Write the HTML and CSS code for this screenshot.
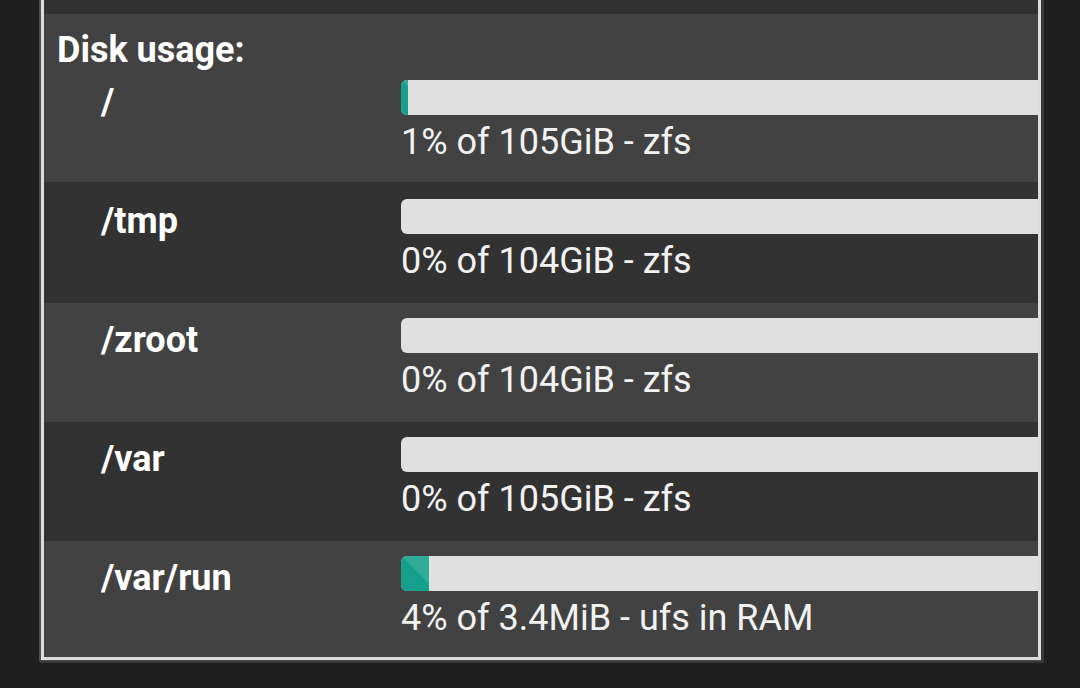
FILE: index.html
```html
<!DOCTYPE html>
<html>
<head>
<meta charset="utf-8">
<link rel="stylesheet" href="styles.css">
</head>
<body>
<div class="page">
  <div class="panel">
    <div class="row-top"></div>
    <div class="row row-light first">
      <div class="title">Disk usage:</div>
      <div class="disk">
        <div class="label">/</div>
        <div class="info">
          <div class="bar"><div class="fill" style="width:1.1%"></div></div>
          <div class="value">1% of 105GiB - zfs</div>
        </div>
      </div>
    </div>
    <div class="row row-dark second">
      <div class="disk">
        <div class="label">/tmp</div>
        <div class="info">
          <div class="bar"><div class="fill" style="width:0%"></div></div>
          <div class="value">0% of 104GiB - zfs</div>
        </div>
      </div>
    </div>
    <div class="row row-light">
      <div class="disk">
        <div class="label">/zroot</div>
        <div class="info">
          <div class="bar"><div class="fill" style="width:0%"></div></div>
          <div class="value">0% of 104GiB - zfs</div>
        </div>
      </div>
    </div>
    <div class="row row-dark">
      <div class="disk">
        <div class="label">/var</div>
        <div class="info">
          <div class="bar"><div class="fill" style="width:0%"></div></div>
          <div class="value">0% of 105GiB - zfs</div>
        </div>
      </div>
    </div>
    <div class="row row-light last">
      <div class="disk">
        <div class="label">/var/run</div>
        <div class="info">
          <div class="bar"><div class="fill" style="width:4.4%"></div></div>
          <div class="value">4% of 3.4MiB - ufs in RAM</div>
        </div>
      </div>
    </div>
  </div>
</div>
</body>
</html>
```
FILE: styles.css
```css
html, body {
  margin: 0;
  padding: 0;
  background: #1f1f1f;
  height: 100%;
  overflow: hidden;
}
body {
  font-family: Roboto, "Liberation Sans", sans-serif;
  color: #fff;
}
.page {
  padding-left: 41px;
}
.panel {
  width: 994px;
  border: 3px solid #dcdcdc;
  border-top: none;
  box-shadow: -1px 0 0 1px #4e4e4e, 1px 1px 0 2px #383838;
  background: #424242;
  overflow: hidden;
}
.row-top {
  height: 14px;
  background: #323232;
}
.row-dark {
  background: #323232;
}
.row-light {
  background: #424242;
}
.row {
  box-sizing: border-box;
  height: 119px;
  padding: 15px 0 0 13px;
}
.row.first {
  height: 168px;
  padding-top: 14px;
}
.row.second {
  height: 121px;
  padding-top: 17px;
}
.row.last {
  height: 116px;
}
.title {
  font-weight: 700;
  font-size: 36px;
  line-height: 44px;
  margin-bottom: 8px;
}
.disk {
  display: flex;
  padding-left: 44px;
}
.label {
  width: 300px;
  font-weight: 700;
  font-size: 36px;
  line-height: 44px;
  margin-top: 0;
}
.info {
  flex: 1;
}
.bar {
  height: 35px;
  background: #e0e0e0;
  border-radius: 6px 0 0 6px;
  overflow: hidden;
}
.fill {
  height: 100%;
  background-color: #14a08a;
  background-image: linear-gradient(45deg, rgba(255,255,255,.12) 25%, transparent 25%, transparent 50%, rgba(255,255,255,.12) 50%, rgba(255,255,255,.12) 75%, transparent 75%, transparent);
  background-size: 70px 70px;
}
.value {
  font-size: 36px;
  line-height: 48px;
  margin-top: 3px;
  color: #f2f2f2;
}
```
